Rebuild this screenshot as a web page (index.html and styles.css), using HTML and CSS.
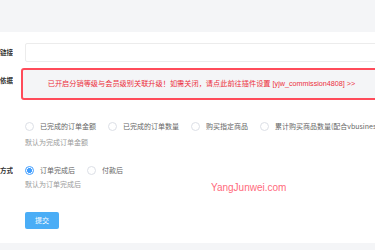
FILE: index.html
```html
<!DOCTYPE html>
<html lang="zh-CN">
<head>
    <meta charset="UTF-8">
    <meta name="viewport" content="width=device-width, initial-scale=1.0">
    <title>分销设置</title>
    <link rel="stylesheet" href="styles.css">
</head>
<body>
    <div class="top-space"></div>
    <div class="panel">
        <div class="form-row row-link">
            <div class="form-label">链接</div>
            <div class="form-field">
                <input class="text-input" type="text">
            </div>
        </div>

        <div class="form-row row-basis">
            <div class="form-label">依据</div>
            <div class="form-field">
                <div class="notice">已开启分销等级与会员级别关联升级！如需关闭，请点此前往插件设置 [yjw_commission4808] &gt;&gt;</div>
            </div>
        </div>

        <div class="form-row row-radios">
            <div class="form-label"></div>
            <div class="form-field">
                <div class="radio-group">
                    <label class="radio"><span class="radio-dot"></span>已完成的订单金额</label>
                    <label class="radio"><span class="radio-dot"></span>已完成的订单数量</label>
                    <label class="radio"><span class="radio-dot"></span>购买指定商品</label>
                    <label class="radio"><span class="radio-dot"></span>累计购买商品数量(配合vbusiness插件使用)</label>
                </div>
                <div class="help">默认为完成订单金额</div>
            </div>
        </div>

        <div class="form-row row-mode">
            <div class="form-label">方式</div>
            <div class="form-field">
                <div class="radio-group">
                    <label class="radio checked"><span class="radio-dot"></span>订单完成后</label>
                    <label class="radio"><span class="radio-dot"></span>付款后</label>
                </div>
                <div class="help help-tight">默认为订单完成后</div>
            </div>
        </div>

        <div class="form-row row-submit">
            <div class="form-label"></div>
            <div class="form-field">
                <button class="btn-submit">提交</button>
            </div>
        </div>

        <div class="watermark">YangJunwei.com</div>
    </div>
</body>
</html>
```

FILE: styles.css
```css
* {
    margin: 0;
    padding: 0;
    box-sizing: border-box;
}

body {
    font-family: "Noto Sans CJK SC", "Liberation Sans", sans-serif;
    background: #f4f5f7;
    color: #333;
    overflow: hidden;
    height: 250px;
}

.top-space {
    height: 32px;
}

.panel {
    position: relative;
    background: #fff;
    height: 211px;
    padding-top: 11px;
    width: 400px;
}

.form-row {
    display: flex;
    gap: 12px;
}

.form-label {
    width: 13px;
    flex: none;
    display: flex;
    justify-content: flex-end;
    white-space: nowrap;
    overflow: hidden;
    font-size: 6.5px;
    font-weight: bold;
    color: #333;
}

.form-field {
    width: 357px;
    flex: none;
}

/* link row */
.row-link .form-label {
    line-height: 19px;
}

.text-input {
    display: block;
    width: 100%;
    height: 19px;
    border: 1px solid #ececec;
    border-radius: 2px;
    background: #fff;
    outline: none;
}

/* upgrade basis */
.row-basis {
    margin-top: 6px;
}

.row-basis .form-label {
    line-height: 10px;
    padding-top: 7px;
}

.notice {
    margin-left: -4px;
    width: 361px;
    height: 32px;
    border: 2px solid #ff4b5a;
    border-radius: 3px;
    background: #f4f5f7;
    color: #ec2f3c;
    font-family: "Liberation Sans", "Noto Sans CJK SC", sans-serif;
    font-size: 7.2px;
    line-height: 28px;
    text-align: center;
    white-space: nowrap;
}

/* radios */
.row-radios {
    margin-top: 21px;
}

.radio-group {
    display: flex;
    gap: 12px;
    height: 10px;
    white-space: nowrap;
}

.radio {
    display: flex;
    align-items: center;
    gap: 6px;
    font-size: 7px;
    line-height: 10px;
    color: #666;
}

.radio-dot {
    width: 9px;
    height: 9px;
    border: 1px solid #dcdfe6;
    border-radius: 50%;
    background: #fff;
    flex: none;
}

.radio.checked .radio-dot {
    border-color: #409eff;
    background: radial-gradient(circle, #409eff 0, #409eff 2.2px, #fff 2.8px);
}

.help {
    margin-top: 6px;
    font-size: 7px;
    line-height: 10px;
    color: #9a9a9a;
}

.help-tight {
    margin-top: 4px;
}

.row-mode {
    margin-top: 18px;
}

.row-mode .form-label {
    line-height: 10px;
}

/* submit */
.row-submit {
    margin-top: 15px;
}

.btn-submit {
    width: 34px;
    height: 17px;
    border: none;
    border-radius: 2px;
    background: #4aadf6;
    color: #fff;
    font-family: "Noto Sans CJK SC", sans-serif;
    font-size: 7px;
}

.watermark {
    position: absolute;
    left: 211px;
    top: 150px;
    font-family: "Liberation Sans", sans-serif;
    font-size: 10px;
    color: #ff4f66;
    opacity: 0.85;
}
```
